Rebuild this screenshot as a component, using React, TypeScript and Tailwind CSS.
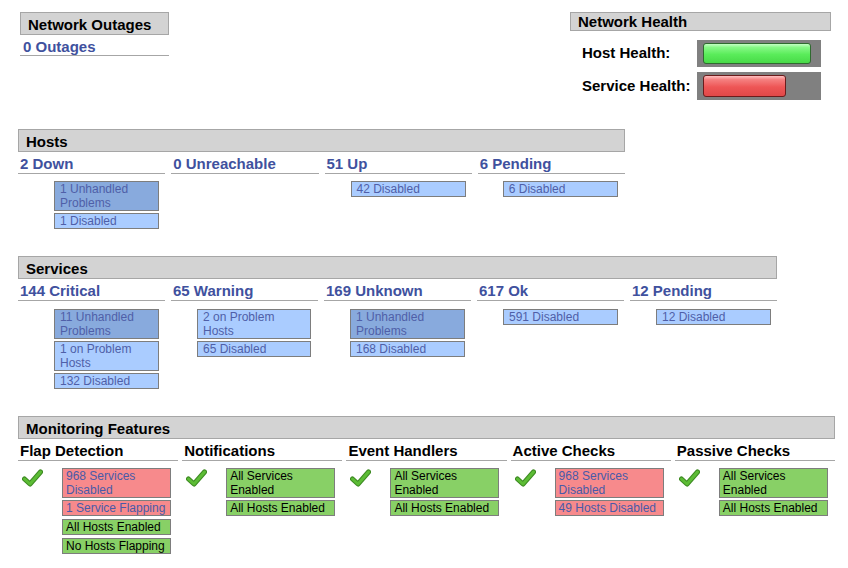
import type { ReactNode } from "react";

type Tone = "dark" | "light" | "red" | "green";

const toneClass: Record<Tone, string> = {
  dark: "bg-[#88aadd] text-[#4f5fa8] px-[5px]",
  light: "bg-[#aaccff] text-[#4f5fa8] px-[5px]",
  red: "bg-[#f78a8c] text-[#4a5aa8] px-[3px]",
  green: "bg-[#88d066] text-black px-[3px]",
};

function Box({ tone, children, className = "" }: { tone: Tone; children: ReactNode; className?: string }) {
  return (
    <div className={`border border-[#7d7d7d] text-[12px] leading-[14px] ${toneClass[tone]} ${className}`}>
      {children}
    </div>
  );
}

function SectionHeader({ title, className = "" }: { title: string; className?: string }) {
  return (
    <div
      className={`box-border h-[23px] border border-[#a6a6a6] bg-[#d3d3d3] pl-[7px] pt-[4px] text-[15px] font-bold leading-[16px] text-black ${className}`}
    >
      {title}
    </div>
  );
}

function ColHeading({ children, blue = true }: { children: ReactNode; blue?: boolean }) {
  return (
    <div
      className={`box-border h-[22px] border-b border-[#a6a6a6] pl-[2px] pt-[3px] text-[15px] font-bold leading-[17px] ${
        blue ? "text-[#40519e]" : "text-black"
      }`}
    >
      {children}
    </div>
  );
}

function Check() {
  return (
    <svg width="21" height="18" viewBox="0 0 21 18" className="ml-[4px] mt-[1px] shrink-0">
      <path d="M2.5 10 L8 15 L18.5 3" fill="none" stroke="#3d8a22" strokeWidth="5" strokeLinecap="round" strokeLinejoin="round" />
      <path d="M2.5 10 L8 15 L18.5 3" fill="none" stroke="#5cbc35" strokeWidth="3" strokeLinecap="round" strokeLinejoin="round" />
    </svg>
  );
}

function FeatureCol({ title, children }: { title: string; children: ReactNode }) {
  return (
    <div>
      <ColHeading blue={false}>{title}</ColHeading>
      <div className="mt-[7px] flex">
        <Check />
        <div className="ml-[19px] flex w-[109px] flex-col">{children}</div>
      </div>
    </div>
  );
}

export default function App() {
  return (
    <div className="h-[568px] w-[848px] overflow-hidden bg-white pt-[12px] font-['Liberation_Sans',Arial,sans-serif]">
      {/* top row */}
      <div className="flex h-[88px] items-start">
        <div className="ml-[20px] w-[149px]">
          <SectionHeader title="Network Outages" />
          <div className="box-border h-[21px] border-b border-[#a6a6a6] pl-[3px] pt-[4px] text-[15px] font-bold leading-[16px] text-[#40519e]">
            0 Outages
          </div>
        </div>

        <div className="ml-auto mr-[17px] w-[261px]">
          <div className="box-border h-[19px] border border-[#a6a6a6] bg-[#d3d3d3] pl-[7px] pt-[1px] text-[15px] font-bold leading-[16px] text-black">
            Network Health
          </div>
          <div className="mt-[9px] flex flex-col gap-[5px]">
            <div className="flex items-center">
              <div className="w-[127px] pl-[12px] text-[15px] font-bold text-black">Host Health:</div>
              <div className="h-[27px] w-[124px] bg-[#808080] pl-[6px] pt-[3px]">
                <div className="h-[21px] w-[108px] rounded-[3px] border border-[#2f6a2f] bg-[linear-gradient(to_bottom,#c4ffc4_0%,#86f886_18%,#5aec5a_55%,#48da48_100%)]" />
              </div>
            </div>
            <div className="flex items-center">
              <div className="w-[127px] pl-[12px] text-[15px] font-bold text-black">Service Health:</div>
              <div className="h-[28px] w-[124px] bg-[#808080] pl-[6px] pt-[3px]">
                <div className="h-[22px] w-[83px] rounded-[3px] border border-[#6b1c1c] bg-[linear-gradient(to_bottom,#ffc0c0_0%,#f58080_18%,#ee5656_55%,#e04848_100%)]" />
              </div>
            </div>
          </div>
        </div>
      </div>

      {/* Hosts */}
      <div className="ml-[18px] mt-[29px] w-[607px]">
        <SectionHeader title="Hosts" />
        <div className="grid grid-cols-4 gap-x-[6px]">
          <div>
            <ColHeading>2 Down</ColHeading>
            <div className="ml-[36px] mt-[7px] flex w-[105px] flex-col gap-[2px]">
              <Box tone="dark">1 Unhandled Problems</Box>
              <Box tone="light">1 Disabled</Box>
            </div>
          </div>
          <div>
            <ColHeading>0 Unreachable</ColHeading>
          </div>
          <div>
            <ColHeading>51 Up</ColHeading>
            <div className="ml-[26px] mt-[7px] flex w-[115px] flex-col gap-[2px]">
              <Box tone="light">42 Disabled</Box>
            </div>
          </div>
          <div>
            <ColHeading>6 Pending</ColHeading>
            <div className="ml-[25px] mt-[7px] flex w-[115px] flex-col gap-[2px]">
              <Box tone="light">6 Disabled</Box>
            </div>
          </div>
        </div>
      </div>

      {/* Services */}
      <div className="ml-[18px] mt-[27px] w-[759px]">
        <SectionHeader title="Services" />
        <div className="grid grid-cols-5 gap-x-[6px]">
          <div>
            <ColHeading>144 Critical</ColHeading>
            <div className="ml-[36px] mt-[8px] flex w-[105px] flex-col gap-[2px]">
              <Box tone="dark">11 Unhandled Problems</Box>
              <Box tone="light">1 on Problem Hosts</Box>
              <Box tone="light">132 Disabled</Box>
            </div>
          </div>
          <div>
            <ColHeading>65 Warning</ColHeading>
            <div className="ml-[26px] mt-[8px] flex w-[114px] flex-col gap-[2px]">
              <Box tone="light">2 on Problem Hosts</Box>
              <Box tone="light">65 Disabled</Box>
            </div>
          </div>
          <div>
            <ColHeading>169 Unknown</ColHeading>
            <div className="ml-[26px] mt-[8px] flex w-[115px] flex-col gap-[2px]">
              <Box tone="dark">1 Unhandled Problems</Box>
              <Box tone="light">168 Disabled</Box>
            </div>
          </div>
          <div>
            <ColHeading>617 Ok</ColHeading>
            <div className="ml-[26px] mt-[8px] flex w-[115px] flex-col gap-[2px]">
              <Box tone="light">591 Disabled</Box>
            </div>
          </div>
          <div>
            <ColHeading>12 Pending</ColHeading>
            <div className="ml-[26px] mt-[8px] flex w-[115px] flex-col gap-[2px]">
              <Box tone="light">12 Disabled</Box>
            </div>
          </div>
        </div>
      </div>

      {/* Monitoring Features */}
      <div className="ml-[18px] mt-[27px] w-[817px]">
        <SectionHeader title="Monitoring Features" />
        <div className="grid grid-cols-5 gap-x-[4px]">
          <FeatureCol title="Flap Detection">
            <Box tone="red">968 Services Disabled</Box>
            <Box tone="red" className="mt-[2px]">1 Service Flapping</Box>
            <Box tone="green" className="mt-[3px]">All Hosts Enabled</Box>
            <Box tone="green" className="mt-[3px]">No Hosts Flapping</Box>
          </FeatureCol>
          <FeatureCol title="Notifications">
            <Box tone="green">All Services Enabled</Box>
            <Box tone="green" className="mt-[2px]">All Hosts Enabled</Box>
          </FeatureCol>
          <FeatureCol title="Event Handlers">
            <Box tone="green">All Services Enabled</Box>
            <Box tone="green" className="mt-[2px]">All Hosts Enabled</Box>
          </FeatureCol>
          <FeatureCol title="Active Checks">
            <Box tone="red">968 Services Disabled</Box>
            <Box tone="red" className="mt-[2px]">49 Hosts Disabled</Box>
          </FeatureCol>
          <FeatureCol title="Passive Checks">
            <Box tone="green">All Services Enabled</Box>
            <Box tone="green" className="mt-[2px]">All Hosts Enabled</Box>
          </FeatureCol>
        </div>
      </div>
    </div>
  );
}
